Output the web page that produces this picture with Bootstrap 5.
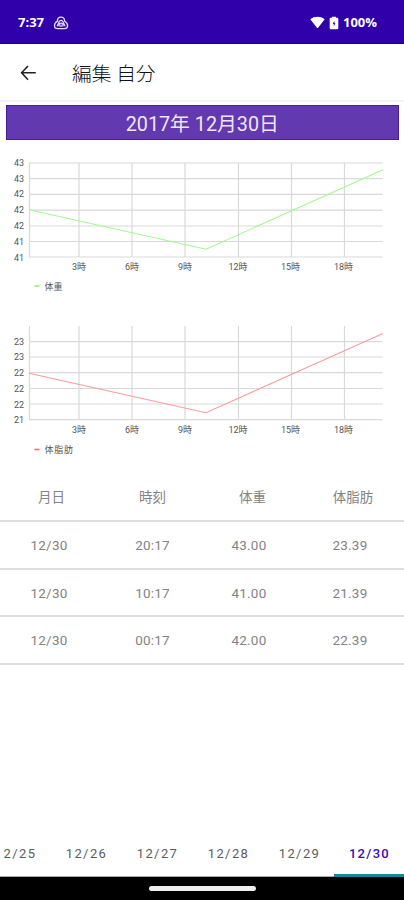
<!DOCTYPE html>
<html lang="ja">
<head>
<meta charset="utf-8">
<meta name="viewport" content="width=device-width, initial-scale=1">
<title>編集 自分</title>
<link href="https://cdn.jsdelivr.net/npm/bootstrap@5.3.0/dist/css/bootstrap.min.css" rel="stylesheet">
<style>
body{font-family:Roboto,"Noto Sans CJK JP",sans-serif;height:900px;overflow:hidden;background:#fff}
.status{height:44px;background:#3000aa;border-bottom:1px solid #1c009a;padding:2px 27px 0 18px;font:700 13px/1 "Open Sans",sans-serif}
.appbar{height:56px;padding:2px 20px 0}
.title{font-size:19.7px;font-weight:300;margin-left:35px;padding-top:3px;color:#111;line-height:1}
.body-area{border-top:2px solid #f3f3f4}
.date-banner{height:35px;margin:3px 5px 0 5.5px;background:#6239ae;border:1px solid #4a1a9f;color:#efe5fa;font-size:19.8px;line-height:1;padding:4px 0 0 0}
.chart{display:block;width:404px}
.chart text{font-size:9px;fill:#555}
.grid-lines{stroke:#d9d9d9;stroke-width:1.2;fill:none}
.records{color:#838383;font-size:13.5px;letter-spacing:.2px}
.record{border-bottom:2px solid #dedede;height:47.5px;line-height:1;padding:2.5px 0 0 0}
.record.head{height:48px;font-size:13.5px;letter-spacing:0;padding:2px 0 0}
.cell-a,.cell-b,.cell-c,.cell-d{flex:none}
.cell-a{width:98px}.cell-b{width:109px}.cell-c{width:84px}.cell-d{width:118px}
.head .cell-a{width:103px}.head .cell-b{width:99px}.head .cell-c{width:101px}.head .cell-d{width:100px}
.tabs{height:48px;margin-right:-1px}
.tab-item{width:71px;flex:none;font-size:13px;letter-spacing:1.4px;color:#5d5d5d;line-height:1;border-bottom:1px solid #aaa;padding:1px 0 0 2px}
.tab-item.partial{width:50px;padding-left:3.5px}
.tab-item.current{color:#3a09c0;font-weight:500;letter-spacing:1.3px;border-bottom:3px solid #15879b;padding:3px 0 0}
.navbar-strip{height:23px;background:#000}
.home-pill{width:107px;height:4.5px;background:#f0eef0}
</style>
<script src="https://cdn.jsdelivr.net/npm/bootstrap@5.3.0/dist/js/bootstrap.bundle.min.js"></script>
</head>
<body class="d-flex flex-column m-0">
<div class="status d-flex align-items-center text-white flex-shrink-0">
  <span>7:37</span>
  <svg class="ms-2" width="18" height="16" viewBox="0 0 18 16" fill="none" stroke="#e6dcfa" stroke-width="1.3"><path d="M9 2.2C6.7 2.2 5.4 4 5.4 6.2C3.5 7.2 2.5 9 2.5 10.7C2.5 12.5 4 13.6 5.8 13.6H12.4C14.2 13.6 15.6 12.4 15.6 10.7C15.6 9 14.5 7.2 12.7 6.2C12.6 4 11.2 2.2 9 2.2Z"/><path d="M5.2 11.3L7.2 6.5C7.9 5 10.2 5 10.9 6.5L13 11.3M7.2 11.6V9.6C7.2 7.7 10.9 7.7 10.9 9.6V11.6M9 9.5V12"/></svg>
  <div class="ms-auto d-flex align-items-center">
    <svg width="15" height="13" viewBox="0 0 15 13" fill="#fff"><path d="M.3 3.2C4.4-.1 10.6-.1 14.7 3.2L8.3 11.6Q7.5 12.6 6.7 11.6Z"/></svg>
    <svg class="ms-1" width="10" height="14" viewBox="0 0 10 14"><path fill="#fff" d="M3 .7H7V1.700H8.200Q9.300 1.700 9.300 2.800V12Q9.300 13.200 8.200 13.200H1.800Q.7 13.200 .7 12V2.800Q.7 1.700 1.800 1.700H3Z"/><path fill="#3000aa" d="M5.400 4.800L3.700 8H4.800V10.300L6.500 7.200H5.400Z"/></svg>
    <span class="ms-1">100%</span>
  </div>
</div>
<header class="appbar d-flex align-items-center flex-shrink-0">
  <svg width="17" height="16" viewBox="0 0 17 16" fill="none" stroke="#222" stroke-width="1.6"><path d="M8 1L1.6 7.8L8 14.8M1.8 7.8H15.8"/></svg>
  <h1 class="title mb-0">編集 自分</h1>
</header>
<main class="body-area flex-grow-1 d-flex flex-column">
  <div class="date-banner d-flex align-items-center justify-content-center flex-shrink-0">2017年 12月30日</div>
  <svg class="chart flex-shrink-0" height="160" viewBox="0 140 404 160">
    <path class="grid-lines" d="M29 163H382.500M29 178.700H382.500M29 194.400H382.500M29 210.200H382.500M29 226H382.500M29 241.500H382.500M29 257H382.500M29.500 163V257M79 163V257M132 163V257M185 163V257M238.500 163V257M291.500 163V257M344.500 163V257"/>
    <path d="M29 209.700L206 249.200L383 169.800" fill="none" stroke="#a5f890" stroke-width="1.100"/>
    <g text-anchor="end"><text x="24" y="165.500">43</text><text x="24" y="181.500">43</text><text x="24" y="197.400">42</text><text x="24" y="213.200">42</text><text x="24" y="229">42</text><text x="24" y="244.500">41</text><text x="24" y="260.500">41</text></g>
    <g text-anchor="middle"><text x="79" y="270">3時</text><text x="132" y="270">6時</text><text x="185" y="270">9時</text><text x="238" y="270">12時</text><text x="290.500" y="270">15時</text><text x="343.500" y="270">18時</text></g>
    <path d="M34.500 286H39.500" stroke="#8cf57a" stroke-width="1.600"/><text x="44.500" y="289.500">体重</text>
  </svg>
  <svg class="chart flex-shrink-0" height="174" viewBox="0 300 404 174">
    <path class="grid-lines" d="M29 341.700H382.500M29 357H382.500M29 372.700H382.500M29 388.500H382.500M29 404H382.500M29 419.700H382.500M29.500 326V419.700M79 326V419.700M132 326V419.700M185 326V419.700M238.500 326V419.700M291.500 326V419.700M344.500 326V419.700"/>
    <path d="M29 373.200L206 412.700L383 333.400" fill="none" stroke="#fa9ca0" stroke-width="1.100"/>
    <g text-anchor="end"><text x="24" y="345">23</text><text x="24" y="360.300">23</text><text x="24" y="376">22</text><text x="24" y="391.700">22</text><text x="24" y="407.500">22</text><text x="24" y="423">21</text></g>
    <g text-anchor="middle"><text x="79" y="433">3時</text><text x="132" y="433">6時</text><text x="185" y="433">9時</text><text x="238" y="433">12時</text><text x="290.500" y="433">15時</text><text x="343.500" y="433">18時</text></g>
    <path d="M34.500 449.500H39.500" stroke="#f56b74" stroke-width="1.600"/><text x="44.500" y="453" textLength="28.500">体脂肪</text>
  </svg>
  <div class="records text-center">
    <div class="record head d-flex align-items-center"><span class="cell-a">月日</span><span class="cell-b">時刻</span><span class="cell-c">体重</span><span class="cell-d">体脂肪</span></div>
    <div class="record d-flex align-items-center"><span class="cell-a">12/30</span><span class="cell-b">20:17</span><span class="cell-c">43.00</span><span class="cell-d">23.39</span></div>
    <div class="record d-flex align-items-center"><span class="cell-a">12/30</span><span class="cell-b">10:17</span><span class="cell-c">41.00</span><span class="cell-d">21.39</span></div>
    <div class="record d-flex align-items-center"><span class="cell-a">12/30</span><span class="cell-b">00:17</span><span class="cell-c">42.00</span><span class="cell-d">22.39</span></div>
  </div>
</main>
<nav class="tabs d-flex justify-content-end flex-shrink-0">
  <div class="tab-item partial d-flex align-items-center">2/25</div>
  <div class="tab-item d-flex align-items-center justify-content-center">12/26</div>
  <div class="tab-item d-flex align-items-center justify-content-center">12/27</div>
  <div class="tab-item d-flex align-items-center justify-content-center">12/28</div>
  <div class="tab-item d-flex align-items-center justify-content-center">12/29</div>
  <div class="tab-item current d-flex align-items-center justify-content-center">12/30</div>
</nav>
<div class="navbar-strip d-flex align-items-center justify-content-center flex-shrink-0"><div class="home-pill rounded-pill"></div></div>
</body>
</html>
